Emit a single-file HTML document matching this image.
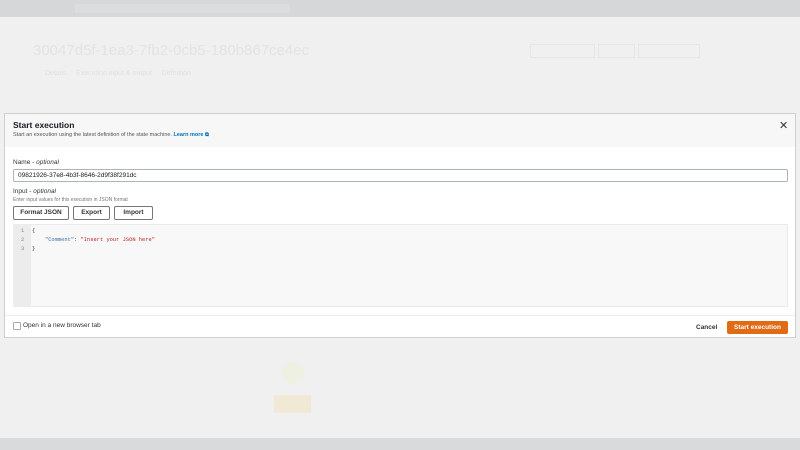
<!DOCTYPE html>
<html><head><meta charset="utf-8"><style>
body{margin:0;width:800px;height:450px;overflow:hidden;background:#f0f0f0;font-family:"Liberation Sans",sans-serif;position:relative}
.a{position:absolute}
.top{left:0;top:0;width:800px;height:17px;background:#d6d7d9}
.bot{left:0;top:438px;width:800px;height:12px;background:#d9dadc}
.ghost{color:#e0e0e0;font-size:7px}
.modal{left:4px;top:113px;width:792px;height:225px;background:#fff;border:1px solid #cfcfcf;box-sizing:border-box}
.hdr{left:0;top:0;width:790px;height:33px;background:#f7f7f7}
.btn{position:absolute;top:92px;height:12px;border:1px solid #777;border-radius:2px;font-size:6.5px;font-weight:bold;color:#333;text-align:center;line-height:12px;background:#fff}
.mono{font-family:"Liberation Mono",monospace;font-size:5.4px}
</style></head><body>
<div class="a top"></div>
<div class="a" style="left:75px;top:4px;width:215px;height:9px;background:#dcdddf;border-radius:2px"></div>
<div class="a ghost" style="left:33px;top:42px;font-size:15px;color:#e3e3e3">30047d5f-1ea3-7fb2-0cb5-180b867ce4ec</div>
<div class="a ghost" style="left:45px;top:70px">Details &nbsp;&nbsp;&nbsp; Execution input &amp; output &nbsp;&nbsp;&nbsp; Definition</div>
<div class="a" style="left:530px;top:44px;width:63px;height:12px;border:1px solid #e6e6e6"></div>
<div class="a" style="left:598px;top:44px;width:35px;height:12px;border:1px solid #e6e6e6"></div>
<div class="a" style="left:638px;top:44px;width:60px;height:12px;border:1px solid #e6e6e6"></div>
<div class="a" style="left:282px;top:362px;width:22px;height:22px;border-radius:50%;background:#eef0e2"></div>
<div class="a" style="left:274px;top:395px;width:37px;height:18px;background:#efe9d6;border-radius:2px"></div>
<div class="a bot"></div>
<div class="a modal">
 <div class="a hdr"></div>
 <div class="a" style="left:8px;top:6px;font-size:8.5px;font-weight:bold;color:#16191f">Start execution</div>
 <div class="a" style="left:8px;top:18px;font-size:5.5px;color:#555">Start an execution using the latest definition of the state machine. <b style="color:#0073bb">Learn more ⧉</b></div>
 <div class="a" style="left:774px;top:5px;font-size:11px;color:#333">✕</div>
 <div class="a" style="left:8px;top:45px;font-size:6.5px;color:#333">Name - <i>optional</i></div>
 <div class="a" style="left:8px;top:55px;width:775px;height:13px;border:1px solid #aab7b8;border-radius:2px;box-sizing:border-box;font-size:6.5px;line-height:11px;padding-left:4px;color:#16191f">09821926-37e8-4b3f-8646-2d9f38f291dc</div>
 <div class="a" style="left:8px;top:74px;font-size:6.5px;color:#333">Input - <i>optional</i></div>
 <div class="a" style="left:8px;top:83px;font-size:5px;color:#777">Enter input values for this execution in JSON format</div>
 <div class="btn" style="left:8px;width:54px">Format JSON</div>
 <div class="btn" style="left:68px;width:35px">Export</div>
 <div class="btn" style="left:109px;width:37px">Import</div>
 <div class="a" style="left:8px;top:110px;width:775px;height:83px;background:#f8f8f8;border:1px solid #eaeaea;box-sizing:border-box"></div>
 <div class="a" style="left:8px;top:110px;width:18px;height:83px;background:#ececec"></div>
 <div class="a mono" style="left:16px;top:113px;color:#888;line-height:9px">1<br>2<br>3</div>
 <div class="a mono" style="left:27px;top:113px;color:#333;line-height:9px">{<br>&nbsp;&nbsp;&nbsp;&nbsp;<span style="color:#3a6fa5">"Comment"</span>: <span style="color:#b22">"Insert your JSON here"</span><br>}</div>
 <div class="a" style="left:0;top:201px;width:790px;height:1px;background:#eee"></div>
 <div class="a" style="left:8px;top:208px;width:6px;height:6px;border:1px solid #aaa;border-radius:1px"></div>
 <div class="a" style="left:18px;top:208px;font-size:6.5px;color:#333">Open in a new browser tab</div>
 <div class="a" style="left:691px;top:210px;font-size:6.5px;font-weight:bold;color:#333">Cancel</div>
 <div class="a" style="left:722px;top:207px;width:61px;height:13px;background:#e06b14;color:#fff;font-size:6.5px;font-weight:bold;text-align:center;line-height:13px;border-radius:2px">Start execution</div>
</div>
</body></html>
